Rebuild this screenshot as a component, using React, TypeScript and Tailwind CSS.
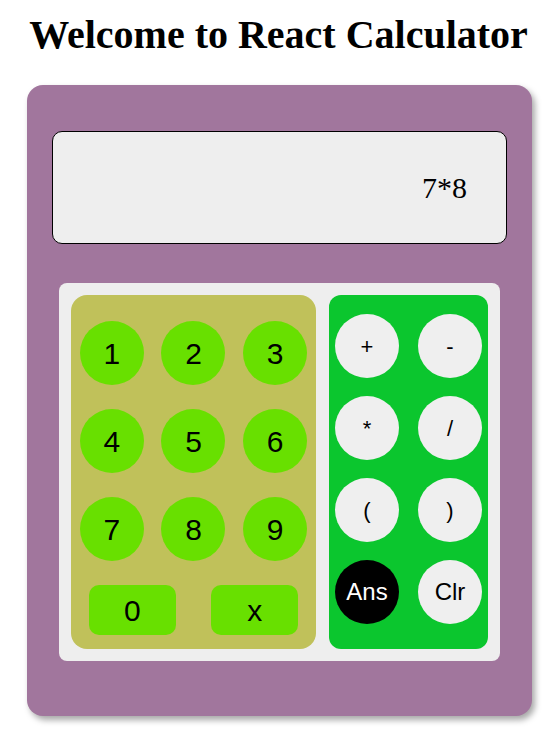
const digits = ["1", "2", "3", "4", "5", "6", "7", "8", "9"];
const ops = ["+", "-", "*", "/", "(", ")"];

const App = () => {
  return (
    <div className="min-h-[739px] bg-white font-['Liberation_Sans',Arial,sans-serif]">
      <h1 className="pt-[12px] text-center font-['Liberation_Serif','Times_New_Roman',serif] text-[40px] font-bold leading-[46px] text-black">
        Welcome to React Calculator
      </h1>

      {/* calculator body */}
      <div className="ml-[27px] mt-[27px] w-[505px] rounded-[16px] bg-[#a1769d] px-[25px] pt-[46px] pb-[55px] shadow-[3px_4px_6px_rgba(0,0,0,0.35)]">
        <div className="flex h-[113px] items-center justify-end rounded-[10px] border border-black bg-[#eeeeee] pr-[39px] font-['Liberation_Serif','Times_New_Roman',serif] text-[30px] text-black">
          7*8
        </div>

        <div className="mx-[7px] mt-[39px] flex gap-[13px] rounded-[8px] bg-[#eeeeee] p-[12px]">
          {/* number pad */}
          <div className="grid h-[354px] w-[245px] grid-cols-3 content-start gap-y-[24px] rounded-[16px] bg-[#c0c15a] pt-[26px]">
            {digits.map((d) => (
              <div key={d} className="flex justify-center">
                <button className="flex h-[64px] w-[64px] items-center justify-center rounded-full bg-[#68e000] text-[30px] text-black">
                  {d}
                </button>
              </div>
            ))}
            <div className="col-span-3 grid grid-cols-2">
              {["0", "x"].map((d) => (
                <div key={d} className="flex justify-center">
                  <button className="flex h-[50px] w-[87px] items-center justify-center rounded-[10px] bg-[#68e000] text-[30px] text-black">
                    {d}
                  </button>
                </div>
              ))}
            </div>
          </div>

          {/* operators */}
          <div className="grid w-[159px] grid-cols-[64px_64px] content-start gap-x-[19px] gap-y-[18px] rounded-[12px] bg-[#0bc62e] pt-[19px] pl-[6px]">
            {ops.map((o) => (
              <button key={o} className="flex h-[64px] w-[64px] items-center justify-center rounded-full bg-[#efefef] text-[22px] text-black">
                {o}
              </button>
            ))}
            <button className="flex h-[64px] w-[64px] items-center justify-center rounded-full bg-black text-[24px] text-white">
              Ans
            </button>
            <button className="flex h-[64px] w-[64px] items-center justify-center rounded-full bg-[#efefef] text-[24px] text-black">
              Clr
            </button>
          </div>
        </div>
      </div>
    </div>
  );
};

export default App;
